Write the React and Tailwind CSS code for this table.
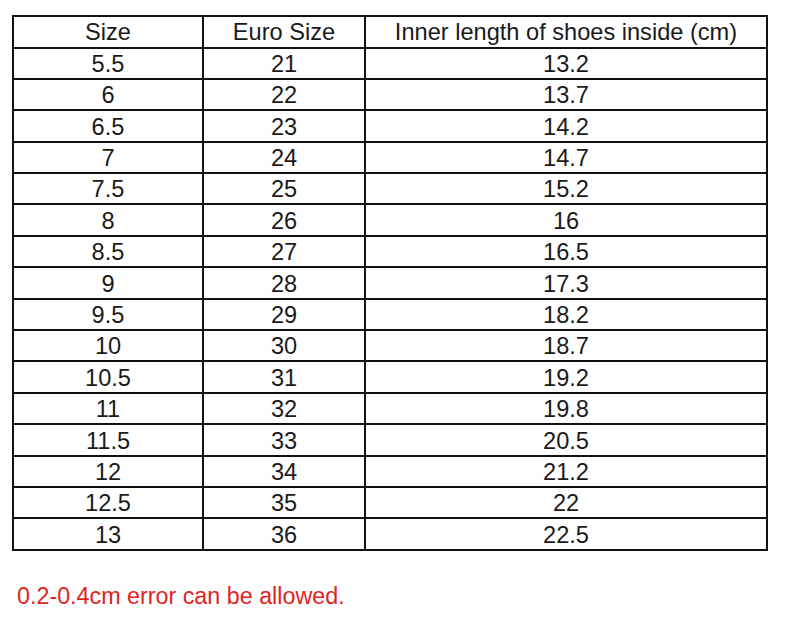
const rows = [
  ['5.5', '21', '13.2'],
  ['6', '22', '13.7'],
  ['6.5', '23', '14.2'],
  ['7', '24', '14.7'],
  ['7.5', '25', '15.2'],
  ['8', '26', '16'],
  ['8.5', '27', '16.5'],
  ['9', '28', '17.3'],
  ['9.5', '29', '18.2'],
  ['10', '30', '18.7'],
  ['10.5', '31', '19.2'],
  ['11', '32', '19.8'],
  ['11.5', '33', '20.5'],
  ['12', '34', '21.2'],
  ['12.5', '35', '22'],
  ['13', '36', '22.5'],
];

export default function App() {
  const cell = 'border-2 border-[#111] p-0 text-center align-middle leading-none pt-[3px]';
  return (
    <div className="w-[800px] h-[626px] bg-white text-[#1a1a1a] font-['Liberation_Sans',Arial,sans-serif] pt-[15px] pl-[12px] overflow-hidden">
      <table className="border-collapse w-[756px] text-[23.6px]">
        <thead>
          <tr className="h-[31.5px]">
            <th className={`${cell} w-[190px] font-normal`}>Size</th>
            <th className={`${cell} w-[162px] font-normal`}>Euro Size</th>
            <th className={`${cell} font-normal`}>Inner length of shoes inside (cm)</th>
          </tr>
        </thead>
        <tbody>
          {rows.map((r) => (
            <tr key={r[0]} className="h-[31.4px]">
              <td className={cell}>{r[0]}</td>
              <td className={cell}>{r[1]}</td>
              <td className={cell}>{r[2]}</td>
            </tr>
          ))}
        </tbody>
      </table>
      <p className="mt-[34px] ml-[5px] text-[23.3px] leading-none text-[#e0241f]">
        0.2-0.4cm error can be allowed.
      </p>
    </div>
  );
}
